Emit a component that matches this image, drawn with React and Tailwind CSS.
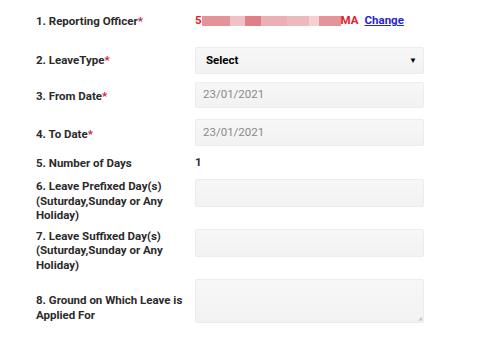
function Label({ children, req, className = "" }) {
  return (
    <div className={"w-[159px] shrink-0 text-[11.5px] leading-[14.5px] font-bold text-[#2b2b2b] " + className}>
      {children}
      {req && <span className="text-[#d4173a]">*</span>}
    </div>
  );
}

function Box({ children, className = "" }) {
  return (
    <div
      className={
        "w-[229px] flex items-center px-[7px] bg-[linear-gradient(#f7f7f7,#f2f2f2)] border border-[#ececec] rounded-[2px] text-[11.5px] " +
        className
      }
    >
      {children}
    </div>
  );
}

export default function App() {
  return (
    <div
      className="min-h-screen bg-white pl-[36px]"
      style={{ fontFamily: "Roboto, 'Liberation Sans', Arial, sans-serif" }}
    >
      {/* 1 */}
      <div className="flex items-center h-[22px] mt-[10px]">
        <Label req className="pr-[8px]">1. Reporting Officer</Label>
        <div className="flex items-center text-[11.5px] font-bold">
          <span className="text-[#e0202a]">5</span>
          <div className="flex h-[10px] items-stretch">
            <span className="w-[28px] bg-[#e49499]" />
            <span className="w-[15px] bg-[#f0c2c5]" />
            <span className="w-[16px] bg-[#df8088]" />
            <span className="w-[26px] bg-[#eab0b4]" />
            <span className="w-[22px] bg-[#ecbabd]" />
            <span className="w-[10px] bg-[#f3d0d2]" />
            <span className="w-[22px] bg-[#e3959a]" />
          </div>
          <span className="text-[#e0202a]">MA</span>
          <span className="ml-[6px] text-[#2727c9] underline">Change</span>
        </div>
      </div>

      {/* 2 */}
      <div className="flex items-center mt-[15px]">
        <Label req>2. LeaveType</Label>
        <Box className="h-[27px] justify-between font-bold text-black pl-[10px] pr-[6px]">
          <span>Select</span>
          <span className="text-[8px] leading-none">▼</span>
        </Box>
      </div>

      {/* 3 */}
      <div className="flex items-center mt-[8px]">
        <Label req className="pt-[3px]">3. From Date</Label>
        <Box className="h-[26px] text-[#8a8a8a]">23/01/2021</Box>
      </div>

      {/* 4 */}
      <div className="flex items-center mt-[11px]">
        <Label req className="pt-[3px]">4. To Date</Label>
        <Box className="h-[27px] text-[#8a8a8a]">23/01/2021</Box>
      </div>

      {/* 5 */}
      <div className="flex items-center h-[20px] mt-[7px]">
        <Label>5. Number of Days</Label>
        <span className="text-[11.5px] font-bold text-[#2b2b2b]">1</span>
      </div>

      {/* 6 */}
      <div className="flex items-start mt-[6px]">
        <Label className="pr-[10px]">6. Leave Prefixed Day(s) (Suturday,Sunday or Any Holiday)</Label>
        <Box className="h-[28px]" />
      </div>

      {/* 7 */}
      <div className="flex items-start mt-[6px]">
        <Label className="pr-[10px]">7. Leave Suffixed Day(s) (Suturday,Sunday or Any Holiday)</Label>
        <Box className="h-[28px]" />
      </div>

      {/* 8 */}
      <div className="flex items-start mt-[7px]">
        <Label className="pt-[14px] pr-[6px]">8. Ground on Which Leave is Applied For</Label>
        <div className="relative">
          <textarea
            readOnly
            className="block w-[229px] h-[44px] resize-none bg-[linear-gradient(#f7f7f7,#f2f2f2)] border border-[#ececec] rounded-[2px] outline-none"
          />
          <span className="absolute right-[2px] bottom-[2px] text-[5px] leading-none text-[#c4c4c4]">◢</span>
        </div>
      </div>
    </div>
  );
}
